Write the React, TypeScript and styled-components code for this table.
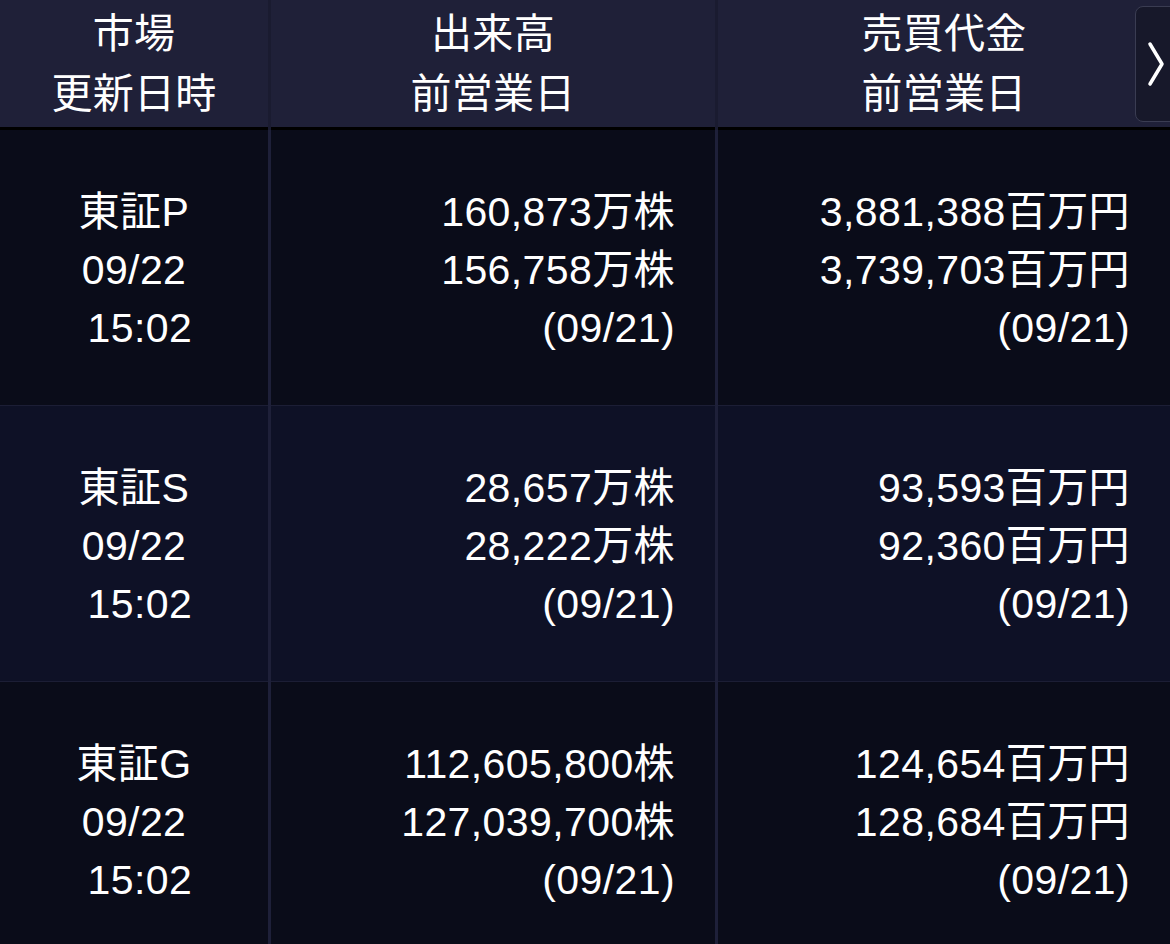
import React from 'react';
import styled, { createGlobalStyle } from 'styled-components';

const GlobalStyle = createGlobalStyle`
    html, body {
        margin: 0;
        padding: 0;
        background: #0a0c19;
    }
    body {
        font-family: "Liberation Sans", "Noto Sans CJK JP", sans-serif;
        color: #fff;
    }
`

const Board = styled.div`
    position: relative;
    width: 1170px;
    height: 944px;
    overflow: hidden;
    background: #0a0c19;
`

const Grid = styled.div`
    display: grid;
    grid-template-columns: 268px 444px 452px;
    column-gap: 3px;
`

const HeadRow = styled.div`
    display: contents;
`

const HeadCell = styled.div`
    height: 127px;
    border-bottom: 3px solid #000;
    background: #1f2038;
    box-shadow: 3px 0 0 #1a1b30;
    display: flex;
    flex-direction: column;
    align-items: center;
    justify-content: center;
    font-size: 41px;
    line-height: 60px;
    letter-spacing: 0.3px;
`

const Cell = styled.div<{ $even: boolean; $align: 'center' | 'right' }>`
    box-sizing: border-box;
    height: 276px;
    padding-top: 4px;
    border-bottom: 1px solid #1c1e35;
    background: ${({ $even }) => ($even ? '#0e1126' : '#0a0c19')};
    box-shadow: 3px 0 0 #1e2039;
    display: flex;
    flex-direction: column;
    justify-content: center;
    align-items: ${({ $align }) => ($align === 'center' ? 'center' : 'flex-end')};
    padding-right: ${({ $align }) => ($align === 'right' ? '40px' : '0')};
    font-size: 41px;
    line-height: 58px;
    letter-spacing: 0.4px;
    white-space: pre;
`

const Line = styled.span`
    display: block;
`

const NextButton = styled.button`
    position: absolute;
    top: 6px;
    left: 1135px;
    width: 48px;
    height: 116px;
    padding: 0 0 0 10px;
    border: 1px solid #3a3c52;
    border-radius: 8px;
    background: #17182a;
    display: flex;
    align-items: center;
    cursor: pointer;
`

const headers = [
    ['市場', '更新日時'],
    ['出来高', '前営業日'],
    ['売買代金', '前営業日'],
]

const markets = [
    {
        name: '東証P',
        volume: ['160,873万株', '156,758万株'],
        value: ['3,881,388百万円', '3,739,703百万円'],
    },
    {
        name: '東証S',
        volume: ['28,657万株', '28,222万株'],
        value: ['93,593百万円', '92,360百万円'],
    },
    {
        name: '東証G',
        volume: ['112,605,800株', '127,039,700株'],
        value: ['124,654百万円', '128,684百万円'],
    },
]

const Chevron = () => (
    <svg width="20" height="46" viewBox="0 0 20 46">
        <path d="M4 3 L16 23 L4 43" fill="none" stroke="#fff" strokeWidth="3.5" strokeLinecap="round" strokeLinejoin="round" />
    </svg>
)

const App: React.FC = () => {
    return (
        <Board>
            <GlobalStyle />
            <Grid>
                <HeadRow>
                    { headers.map((lines) => (
                        <HeadCell key={ lines[0] }>
                            { lines.map((l) => <Line key={ l }>{ l }</Line>) }
                        </HeadCell>
                    )) }
                </HeadRow>
                { markets.map(({ name, volume, value }, i) => {
                    const even = i % 2 === 1;
                    return (
                        <React.Fragment key={ name }>
                            <Cell $even={ even } $align="center">
                                <Line>{ name }</Line>
                                <Line>09/22</Line>
                                <Line>{ ' 15:02' }</Line>
                            </Cell>
                            <Cell $even={ even } $align="right">
                                <Line>{ volume[0] }</Line>
                                <Line>{ volume[1] }</Line>
                                <Line>(09/21)</Line>
                            </Cell>
                            <Cell $even={ even } $align="right">
                                <Line>{ value[0] }</Line>
                                <Line>{ value[1] }</Line>
                                <Line>(09/21)</Line>
                            </Cell>
                        </React.Fragment>
                    );
                }) }
            </Grid>
            <NextButton aria-label="次へ">
                <Chevron />
            </NextButton>
        </Board>
    );
};

export default App;
